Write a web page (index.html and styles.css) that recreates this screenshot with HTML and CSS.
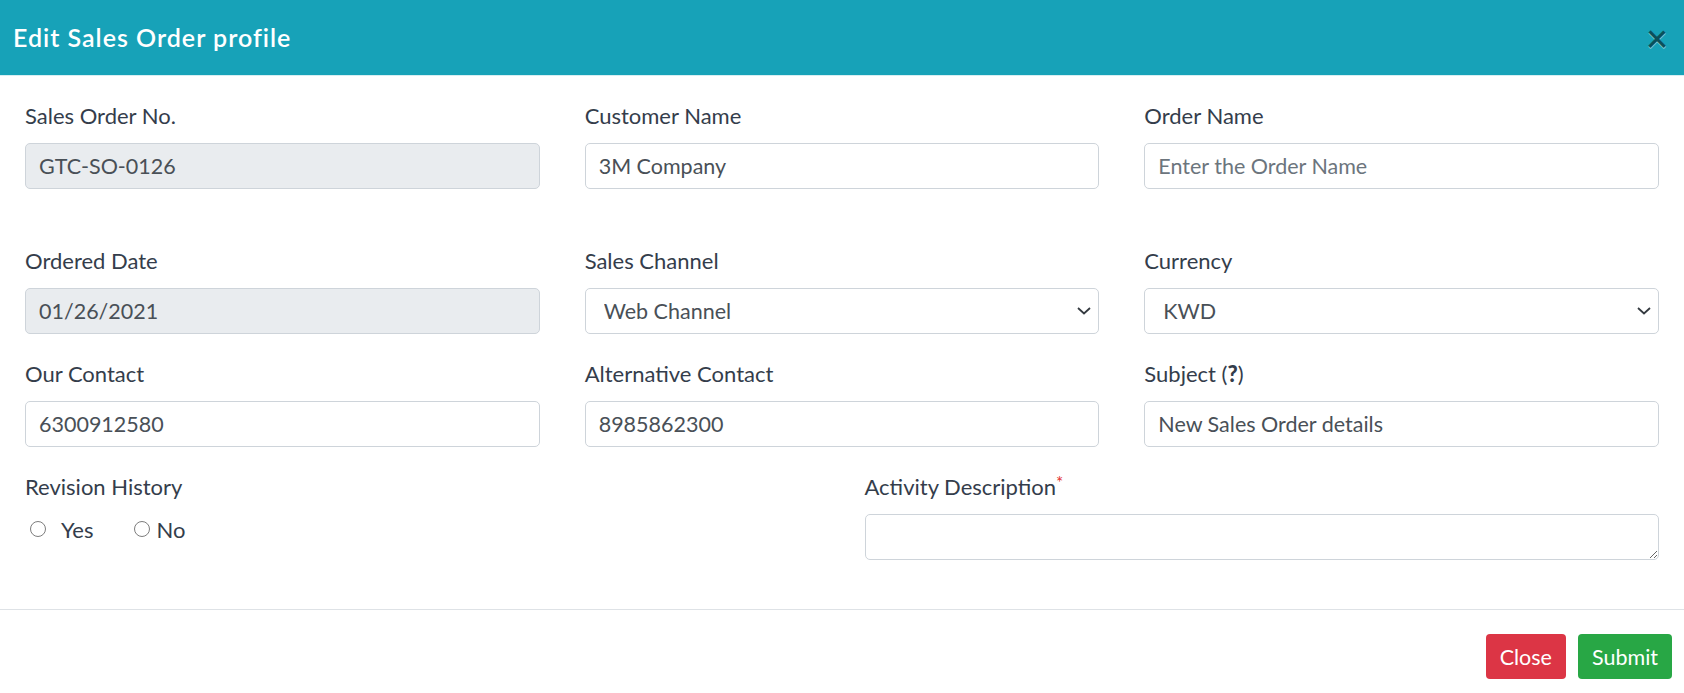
FILE: index.html
```html
<!DOCTYPE html>
<html lang="en">
<head>
  <meta charset="UTF-8">
  <meta name="viewport" content="width=device-width, initial-scale=1.0">
  <title>Edit Sales Order profile</title>
  <link rel="stylesheet" href="styles.css">
</head>
<body>
  <div class="modal">
    <header class="modal__header">
      <h5 class="modal__title">Edit Sales Order profile</h5>
      <button class="modal__close" type="button">&times;</button>
    </header>
    <form class="modal__body">
      <div class="form__row form__row--first">
        <div class="form__group">
          <label class="form__label">Sales Order No.</label>
          <input class="form__control" type="text" value="GTC-SO-0126" readonly>
        </div>
        <div class="form__group">
          <label class="form__label">Customer Name</label>
          <input class="form__control" type="text" value="3M Company">
        </div>
        <div class="form__group">
          <label class="form__label">Order Name</label>
          <input class="form__control" type="text" placeholder="Enter the Order Name">
        </div>
      </div>
      <div class="form__row">
        <div class="form__group">
          <label class="form__label">Ordered Date</label>
          <input class="form__control" type="text" value="01/26/2021" readonly>
        </div>
        <div class="form__group">
          <label class="form__label">Sales Channel</label>
          <div class="select__wrap">
            <select class="form__control form__select">
              <option>Web Channel</option>
            </select>
            <svg class="select__arrow" viewBox="0 0 14 8" width="14" height="8"><path d="M1 1l6 5.5L13 1" fill="none" stroke="#343a40" stroke-width="1.8"/></svg>
          </div>
        </div>
        <div class="form__group">
          <label class="form__label">Currency</label>
          <div class="select__wrap">
            <select class="form__control form__select">
              <option>KWD</option>
            </select>
            <svg class="select__arrow" viewBox="0 0 14 8" width="14" height="8"><path d="M1 1l6 5.5L13 1" fill="none" stroke="#343a40" stroke-width="1.8"/></svg>
          </div>
        </div>
      </div>
      <div class="form__row">
        <div class="form__group">
          <label class="form__label">Our Contact</label>
          <input class="form__control" type="text" value="6300912580">
        </div>
        <div class="form__group">
          <label class="form__label">Alternative Contact</label>
          <input class="form__control" type="text" value="8985862300">
        </div>
        <div class="form__group">
          <label class="form__label">Subject (<b>?</b>)</label>
          <input class="form__control" type="text" value="New Sales Order details">
        </div>
      </div>
      <div class="form__row form__row--half">
        <div class="form__group">
          <label class="form__label">Revision History</label>
          <div class="radio__list">
            <label class="radio__item radio__item--yes"><span class="radio__circle"></span>Yes</label>
            <label class="radio__item"><span class="radio__circle"></span>No</label>
          </div>
        </div>
        <div class="form__group">
          <label class="form__label">Activity Description<span class="required">*</span></label>
          <textarea class="form__control form__textarea"></textarea>
        </div>
      </div>
    </form>
    <footer class="modal__footer">
      <button class="btn btn--danger" type="button">Close</button>
      <button class="btn btn--success" type="button">Submit</button>
    </footer>
  </div>
</body>
</html>
```

FILE: styles.css
```css
* {
  margin: 0;
  padding: 0;
  box-sizing: border-box;
}

body {
  background: #fff;
  font-family: Lato, "Open Sans", sans-serif;
  font-size: 22px;
  color: #343d4b;
}

.modal__header {
  display: flex;
  align-items: center;
  justify-content: space-between;
  height: 76px;
  padding: 0 13px 1px;
  background: #17a2b8;
  border-bottom: 1px solid #d6eef2;
}

.modal__title {
  font-size: 25px;
  font-weight: 600;
  color: #fff;
  letter-spacing: 1px;
}

.modal__close {
  margin-right: 3px;
  border: none;
  background: none;
  font-family: Lato, sans-serif;
  font-size: 38px;
  font-weight: 600;
  line-height: 1;
  color: #000;
  text-shadow: 0 1px 0 #fff;
  opacity: 0.5;
  cursor: pointer;
}

.modal__body {
  padding: 24px 25px 49px;
}

.form__row {
  display: grid;
  grid-template-columns: repeat(3, 1fr);
  column-gap: 45px;
  margin-bottom: 24px;
}

.form__row--first {
  margin-bottom: 56px;
}

.form__row--half {
  grid-template-columns: repeat(2, 1fr);
  margin-bottom: 0;
}

.form__label {
  display: block;
  height: 32px;
  margin-bottom: 11px;
  line-height: 32px;
}

.form__label b {
  font-weight: 900;
}

.required {
  color: #e3342f;
  font-size: 17px;
  vertical-align: top;
  line-height: 24px;
}

.form__control {
  display: block;
  width: 100%;
  height: 46px;
  padding: 0 13px;
  border: 1px solid #ced4da;
  border-radius: 5px;
  background: #fff;
  font-family: inherit;
  font-size: 21.5px;
  color: #495057;
  outline: none;
}

.form__control::placeholder {
  color: #6c757d;
}

.form__control[readonly] {
  background: #e9ecef;
}

.select__wrap {
  position: relative;
}

.form__select {
  -webkit-appearance: none;
  appearance: none;
  padding-left: 18px;
}

.select__arrow {
  position: absolute;
  top: 19px;
  right: 8px;
}

.form__textarea {
  resize: vertical;
}

.radio__list {
  display: flex;
  align-items: center;
  height: 34px;
  margin-top: -2px;
  padding-left: 5px;
}

.radio__item {
  display: flex;
  align-items: center;
  cursor: pointer;
}

.radio__circle {
  flex: none;
  display: block;
  width: 16px;
  height: 16px;
  margin-right: 6px;
  border: 1px solid #7d7d7d;
  border-radius: 50%;
  background: #fff;
}

.radio__item--yes {
  margin-right: 41px;
}

.radio__item--yes .radio__circle {
  margin-right: 15px;
}

.modal__footer {
  display: flex;
  justify-content: flex-end;
  gap: 12px;
  padding: 24px 12px 14px;
  border-top: 1px solid #dee2e6;
}

.btn {
  height: 45px;
  padding: 0 14px;
  border: none;
  border-radius: 4px;
  font-family: inherit;
  font-size: 21.5px;
  color: #fff;
  cursor: pointer;
}

.btn--danger {
  background: #dc3545;
}

.btn--success {
  background: #28a745;
}
```
